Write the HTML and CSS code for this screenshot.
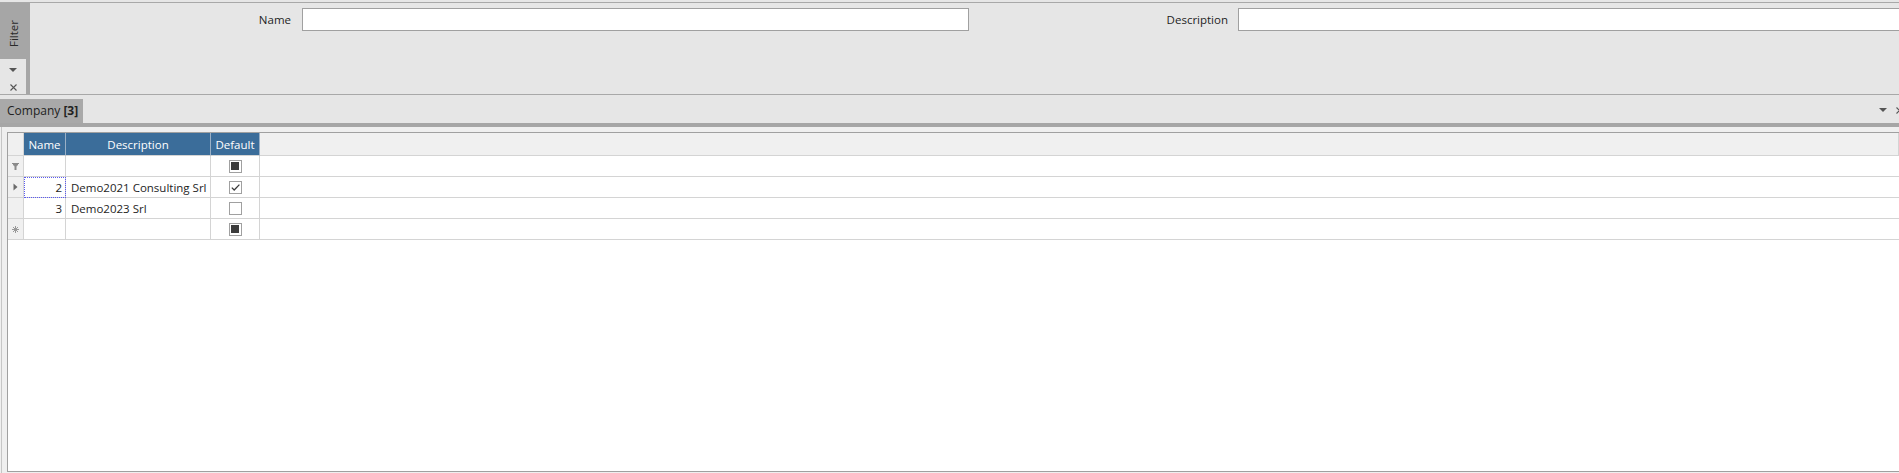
FILE: index.html
```html
<!DOCTYPE html>
<html>
<head>
<meta charset="utf-8">
<title>Company</title>
<link rel="stylesheet" href="styles.css">
</head>
<body>
<div class="app">
  <div class="filter">
    <div class="filter-side">
      <div class="filter-tab"><span class="filter-tab-text">Filter</span></div>
      <div class="side-btns">
        <span class="tri"></span>
        <svg class="xicon" width="7" height="7" viewBox="0 0 7 7"><path d="M0.5 0.5 L6.5 6.5 M6.5 0.5 L0.5 6.5" stroke="#555" stroke-width="1.1" fill="none"/></svg>
      </div>
    </div>
    <div class="filter-body">
      <label class="lbl lbl-name">Name</label>
      <div class="input input-name"></div>
      <label class="lbl lbl-desc">Description</label>
      <div class="input input-desc"></div>
    </div>
  </div>

  <div class="tabbar">
    <div class="tab">Company <b>[3]</b></div>
    <div class="tab-tools">
      <span class="tri"></span>
      <svg class="xicon" width="7" height="7" viewBox="0 0 7 7"><path d="M0.5 0.5 L6.5 6.5 M6.5 0.5 L0.5 6.5" stroke="#555" stroke-width="1.1" fill="none"/></svg>
    </div>
  </div>
  <div class="tabline"></div>

  <div class="content">
    <div class="grid">
      <div class="rows">
        <!-- header -->
        <div class="c ind hdr-ind"></div>
        <div class="c hdr">Name</div>
        <div class="c hdr">Description</div>
        <div class="c hdr">Default</div>
        <div class="c hdr-fill"></div>

        <!-- auto filter row -->
        <div class="c ind">
          <svg width="7" height="7" viewBox="0 0 7 7"><path d="M0 0.5 H7 M1 1.5 H6 L3.5 3.5 Z M3 3 H4 V7 H3 Z" stroke="#8a8a8a" stroke-width="1" fill="#8a8a8a"/></svg>
        </div>
        <div class="c"></div>
        <div class="c"></div>
        <div class="c chk-cell"><span class="chk"><span class="ind-sq"></span></span></div>
        <div class="c fill"></div>

        <!-- row 2 -->
        <div class="c ind">
          <svg width="5" height="8" viewBox="0 0 5 8"><path d="M0.5 0.5 L4.5 4 L0.5 7.5 Z" fill="#6a6a6a"/></svg>
        </div>
        <div class="c num focus">2</div>
        <div class="c txt">Demo2021 Consulting Srl</div>
        <div class="c chk-cell"><span class="chk"><svg width="11" height="11" viewBox="0 0 11 11"><path d="M1.8 5.6 L4.2 8 L9.4 2.6" stroke="#3a3a3a" stroke-width="1.3" fill="none"/></svg></span></div>
        <div class="c fill"></div>

        <!-- row 3 -->
        <div class="c ind"></div>
        <div class="c num">3</div>
        <div class="c txt">Demo2023 Srl</div>
        <div class="c chk-cell"><span class="chk"></span></div>
        <div class="c fill"></div>

        <!-- new item row -->
        <div class="c ind">
          <svg width="7" height="7" viewBox="0 0 7 7"><path d="M3.5 0 V7 M0 3.5 H7 M1 1 L6 6 M6 1 L1 6" stroke="#999" stroke-width="1" fill="none"/></svg>
        </div>
        <div class="c"></div>
        <div class="c"></div>
        <div class="c chk-cell"><span class="chk"><span class="ind-sq"></span></span></div>
        <div class="c fill"></div>
      </div>
    </div>
  </div>
</div>
</body>
</html>
```

FILE: styles.css
```css
* { box-sizing: border-box; }

html, body {
  margin: 0;
  padding: 0;
  width: 1899px;
  height: 473px;
  overflow: hidden;
  background: #e6e6e6;
  font-family: "Open Sans", "Segoe UI", sans-serif;
  font-size: 11.5px;
  color: #1e1e1e;
}

.app {
  display: flex;
  flex-direction: column;
  height: 473px;
}

/* ---------- filter panel ---------- */
.filter {
  display: flex;
  height: 93px;
  margin-top: 2px;
  border-top: 1px solid #a8a8a8;
  border-bottom: 1px solid #a8a8a8;
  flex-shrink: 0;
}

.filter-side {
  width: 26px;
  display: flex;
  flex-direction: column;
}

.filter-tab {
  height: 56px;
  background: #a6a6a6;
  display: flex;
  align-items: center;
  justify-content: center;
  padding-top: 5px;
}

.filter-tab-text {
  writing-mode: vertical-rl;
  transform: rotate(180deg);
  color: #2a2a2a;
  font-size: 11.5px;
  line-height: 13px;
}

.side-btns {
  display: flex;
  flex-direction: column;
  align-items: center;
  padding-top: 9px;
  gap: 12px;
}

.tri {
  display: block;
  width: 0;
  height: 0;
  border-left: 4px solid transparent;
  border-right: 4px solid transparent;
  border-top: 4px solid #555;
}

.xicon { display: block; }

.filter-body {
  flex: 1;
  display: flex;
  align-items: flex-start;
  padding-top: 5px;
  border-left: 4px solid #a6a6a6;
}

.lbl {
  height: 23px;
  line-height: 23px;
  text-align: right;
  white-space: nowrap;
}

.lbl-name { width: 261px; margin-right: 11px; }
.lbl-desc { width: 259px; margin-right: 10px; }

.input {
  height: 23px;
  background: #fff;
  border: 1px solid #a0a0a0;
}

.input-name { width: 667px; }
.input-desc { flex: 1; margin-right: -20px; }

/* ---------- tab bar ---------- */
.tabbar {
  height: 28px;
  display: flex;
  align-items: flex-end;
  justify-content: space-between;
  flex-shrink: 0;
}

.tab {
  width: 83px;
  height: 24px;
  background: #a9a9a9;
  padding-left: 7px;
  line-height: 24px;
  font-size: 12px;
  color: #222;
  white-space: nowrap;
}

.tab b { font-weight: 700; }

.tab-tools {
  align-self: center;
  display: flex;
  align-items: center;
  gap: 9px;
  margin-right: -4px;
  padding-top: 2px;
}

.tabline {
  height: 4px;
  background: #a6a6a6;
  flex-shrink: 0;
}

/* ---------- content / grid ---------- */
.content {
  flex: 1;
  background: #efefef;
  padding: 5px 0 1px 1px;
  display: flex;
}

.content::before {
  content: "";
  width: 1px;
  background: #c6c6c6;
  margin-right: 5px;
  margin-top: -5px;
  margin-bottom: -1px;
}

.grid {
  flex: 1;
  background: #fff;
  border-top: 1px solid #a0a0a0;
  border-left: 1px solid #a0a0a0;
  border-bottom: 1px solid #a0a0a0;
}

.rows {
  display: grid;
  grid-template-columns: 16px 42px 145px 49px 1fr;
  grid-template-rows: 23px repeat(4, 21px);
}

.c {
  border-right: 1px solid #d4d4d4;
  border-bottom: 1px solid #d4d4d4;
  display: flex;
  align-items: center;
  white-space: nowrap;
  overflow: hidden;
}

.ind {
  background: #f0f0f0;
  justify-content: center;
}

.hdr-ind { background: #f0f0f0; }

.hdr {
  background: #3b6d9a;
  color: #fff;
  justify-content: center;
  border-right: 1px solid #9ab0c6;
  border-bottom: 1px solid #d4d4d4;
}

.hdr-fill {
  background: #f0f0f0;
  border-bottom: 1px solid #d4d4d4;
}

.fill { border-right: none; }

.num {
  justify-content: flex-end;
  padding-right: 3px;
}

.txt { padding-left: 5px; }

.focus {
  outline: 1px dotted #5a5af0;
  outline-offset: -1px;
}

.chk-cell { justify-content: center; }

.chk {
  width: 13px;
  height: 13px;
  border: 1px solid #a0a0a0;
  background: #fff;
  display: flex;
  align-items: center;
  justify-content: center;
}

.ind-sq {
  width: 8px;
  height: 8px;
  background: #3c3c3c;
}
```
